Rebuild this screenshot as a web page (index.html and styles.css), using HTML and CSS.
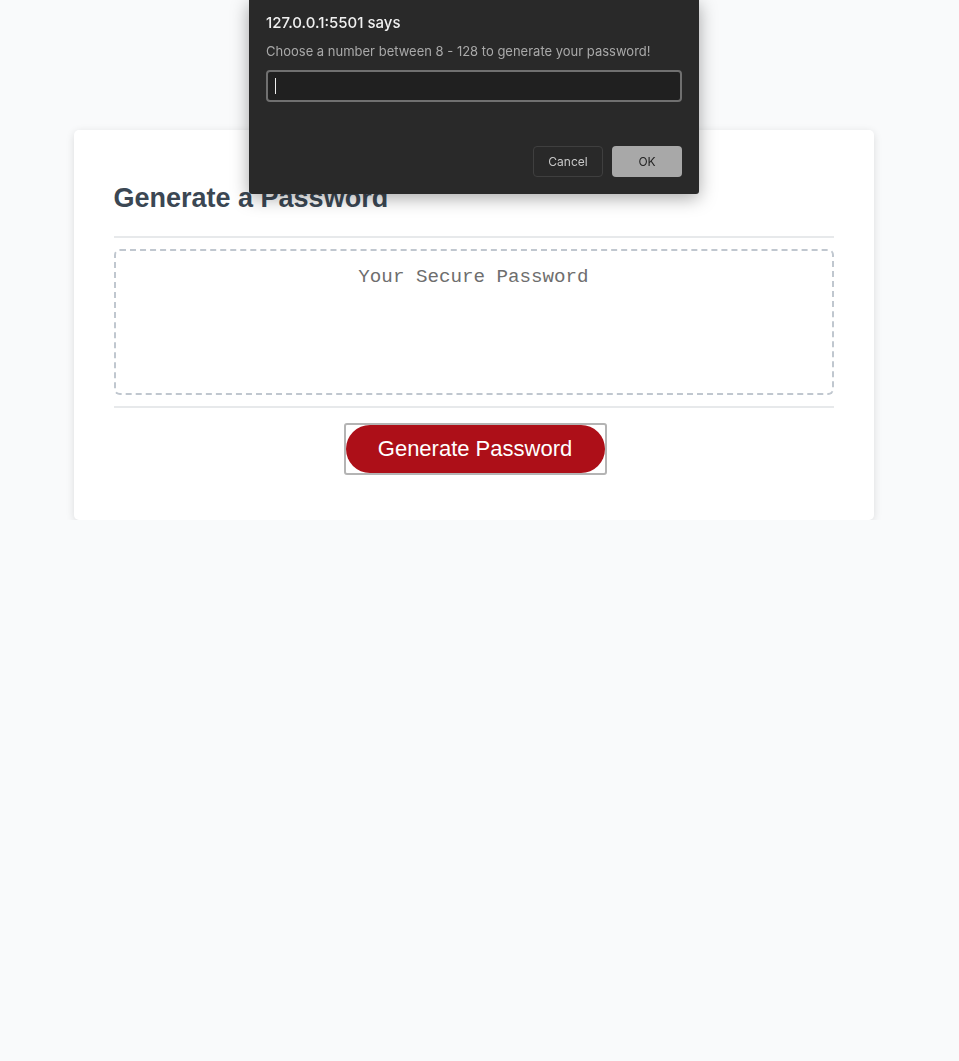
FILE: index.html
```html
<!DOCTYPE html>
<html lang="en">
<head>
    <meta charset="UTF-8">
    <meta name="viewport" content="width=device-width, initial-scale=1.0">
    <title>Password Generator</title>
    <link rel="stylesheet" href="styles.css">
</head>
<body>
    <div class="wrapper">
        <div class="card">
            <div class="card-header">
                <h2>Generate a Password</h2>
            </div>
            <div class="card-body">
                <textarea readonly id="password" placeholder="Your Secure Password" aria-label="Generated Password"></textarea>
            </div>
            <div class="card-footer">
                <button id="generate" class="btn"><span class="btn-pill">Generate Password</span></button>
            </div>
        </div>
    </div>

    <!-- browser prompt -->
    <div class="prompt">
        <div class="prompt-title">127.0.0.1:5501 says</div>
        <div class="prompt-msg">Choose a number between 8 - 128 to generate your password!</div>
        <div class="prompt-input"><span class="caret"></span></div>
        <div class="prompt-actions">
            <button class="prompt-btn cancel">Cancel</button>
            <button class="prompt-btn ok">OK</button>
        </div>
    </div>
</body>
</html>
```

FILE: styles.css
```css
* {
    box-sizing: border-box;
}

body {
    margin: 0;
    padding: 0;
    background-color: #f9fafb;
    font-family: "Liberation Sans", Arial, sans-serif;
}

.wrapper {
    padding: 130px 32px 0 20px;
}

.card {
    margin: 0 auto;
    max-width: 800px;
    padding: 30px 40px 45px;
    background-color: #fff;
    border-radius: 5px;
    box-shadow: rgba(0, 0, 0, 0.12) 0px 2px 8px 0px;
}

.card-header h2 {
    margin: 22px 0 22px;
    color: #3b4753;
    font-size: 27px;
    line-height: 32px;
}

.card-header::after,
.card-footer::before {
    content: " ";
    display: block;
    width: 100%;
    height: 2px;
    background-color: #e7e9eb;
}

.card-body {
    padding: 11px 0;
}

textarea {
    display: block;
    width: 100%;
    height: 146px;
    margin: 0;
    padding: 15px 20px;
    border: 2px dashed #c0c7cf;
    border-radius: 6px;
    resize: none;
    overflow: hidden;
    font-family: "Liberation Mono", "Courier New", monospace;
    font-size: 19.2px;
    text-align: center;
    outline: none;
}

textarea::placeholder {
    color: #6e6e6e;
}

.card-footer {
    text-align: center;
}

.btn {
    margin: 15px 0 0 3px;
    padding: 0;
    border: 2px solid #b4b4b4;
    border-radius: 3px;
    background: none;
    cursor: pointer;
}

.btn-pill {
    display: block;
    width: 259px;
    padding: 13px 0;
    border-radius: 25px;
    background-color: #ad0f18;
    color: #fff;
    font-family: "Liberation Sans", Arial, sans-serif;
    font-size: 22px;
    line-height: 22px;
}

/* Chrome prompt dialog */
.prompt {
    position: fixed;
    top: 0;
    left: 249px;
    width: 450px;
    height: 194px;
    padding: 13px 17px 17px;
    background-color: #292929;
    border-radius: 0 0 3px 3px;
    box-shadow: 0 4px 18px rgba(0, 0, 0, 0.35);
    font-family: Inter, "Liberation Sans", sans-serif;
    display: flex;
    flex-direction: column;
}

.prompt-title {
    color: #f0f0f0;
    font-size: 15px;
    line-height: 19px;
    font-weight: 500;
}

.prompt-msg {
    margin-top: 11px;
    color: #a9a9a9;
    font-size: 13px;
    line-height: 16px;
}

.prompt-input {
    margin-top: 11px;
    height: 32px;
    background-color: #202020;
    border: 2px solid #707070;
    border-radius: 4px;
    padding: 6px 7px;
}

.caret {
    display: block;
    width: 1px;
    height: 16px;
    background-color: #eee;
}

.prompt-actions {
    margin-top: auto;
    display: flex;
    justify-content: flex-end;
    gap: 9px;
}

.prompt-btn {
    width: 70px;
    height: 31px;
    border-radius: 4px;
    font-family: Inter, "Liberation Sans", sans-serif;
    font-size: 12px;
}

.cancel {
    background-color: #292929;
    border: 1px solid #3f3f3f;
    color: #c8c8c8;
}

.ok {
    background-color: #a8a8a8;
    border: none;
    color: #1f1f1f;
}
```
